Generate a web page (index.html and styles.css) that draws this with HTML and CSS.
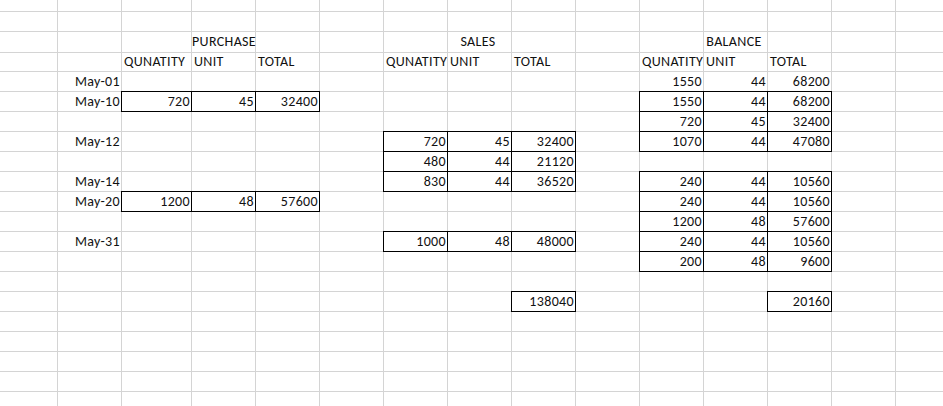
FILE: index.html
```html
<!DOCTYPE html>
<html>
<head>
<meta charset="utf-8">
<title>Sheet</title>
<link rel="stylesheet" href="styles.css">
</head>
<body>
<div class="sheet">
  <div class="row first"><div class="cell"></div><div class="cell"></div><div class="cell"></div><div class="cell"></div><div class="cell"></div><div class="cell"></div><div class="cell"></div><div class="cell"></div><div class="cell"></div><div class="cell"></div><div class="cell"></div><div class="cell"></div><div class="cell"></div><div class="cell"></div><div class="cell"></div></div>
  <div class="row"><div class="cell"></div><div class="cell"></div><div class="cell"></div><div class="cell"></div><div class="cell"></div><div class="cell"></div><div class="cell"></div><div class="cell"></div><div class="cell"></div><div class="cell"></div><div class="cell"></div><div class="cell"></div><div class="cell"></div><div class="cell"></div><div class="cell"></div></div>
  <div class="row"><div class="cell"></div><div class="cell"></div><div class="cell"></div><div class="cell ctr">PURCHASE</div><div class="cell"></div><div class="cell"></div><div class="cell"></div><div class="cell ctr">SALES</div><div class="cell"></div><div class="cell"></div><div class="cell"></div><div class="cell ctr">BALANCE</div><div class="cell"></div><div class="cell"></div><div class="cell"></div></div>
  <div class="row"><div class="cell"></div><div class="cell"></div><div class="cell">QUNATITY</div><div class="cell">UNIT</div><div class="cell">TOTAL</div><div class="cell"></div><div class="cell">QUNATITY</div><div class="cell">UNIT</div><div class="cell">TOTAL</div><div class="cell"></div><div class="cell">QUNATITY</div><div class="cell">UNIT</div><div class="cell">TOTAL</div><div class="cell"></div><div class="cell"></div></div>
  <div class="row"><div class="cell"></div><div class="cell n">May-01</div><div class="cell"></div><div class="cell"></div><div class="cell"></div><div class="cell"></div><div class="cell"></div><div class="cell"></div><div class="cell"></div><div class="cell"></div><div class="cell n">1550</div><div class="cell n">44</div><div class="cell n">68200</div><div class="cell"></div><div class="cell"></div></div>
  <div class="row"><div class="cell"></div><div class="cell n">May-10</div><div class="cell n box">720</div><div class="cell n box">45</div><div class="cell n box">32400</div><div class="cell"></div><div class="cell"></div><div class="cell"></div><div class="cell"></div><div class="cell"></div><div class="cell n box">1550</div><div class="cell n box">44</div><div class="cell n box">68200</div><div class="cell"></div><div class="cell"></div></div>
  <div class="row"><div class="cell"></div><div class="cell"></div><div class="cell"></div><div class="cell"></div><div class="cell"></div><div class="cell"></div><div class="cell"></div><div class="cell"></div><div class="cell"></div><div class="cell"></div><div class="cell n box">720</div><div class="cell n box">45</div><div class="cell n box">32400</div><div class="cell"></div><div class="cell"></div></div>
  <div class="row"><div class="cell"></div><div class="cell n">May-12</div><div class="cell"></div><div class="cell"></div><div class="cell"></div><div class="cell"></div><div class="cell n box">720</div><div class="cell n box">45</div><div class="cell n box">32400</div><div class="cell"></div><div class="cell n box">1070</div><div class="cell n box">44</div><div class="cell n box">47080</div><div class="cell"></div><div class="cell"></div></div>
  <div class="row"><div class="cell"></div><div class="cell"></div><div class="cell"></div><div class="cell"></div><div class="cell"></div><div class="cell"></div><div class="cell n box">480</div><div class="cell n box">44</div><div class="cell n box">21120</div><div class="cell"></div><div class="cell"></div><div class="cell"></div><div class="cell"></div><div class="cell"></div><div class="cell"></div></div>
  <div class="row"><div class="cell"></div><div class="cell n">May-14</div><div class="cell"></div><div class="cell"></div><div class="cell"></div><div class="cell"></div><div class="cell n box">830</div><div class="cell n box">44</div><div class="cell n box">36520</div><div class="cell"></div><div class="cell n box">240</div><div class="cell n box">44</div><div class="cell n box">10560</div><div class="cell"></div><div class="cell"></div></div>
  <div class="row"><div class="cell"></div><div class="cell n">May-20</div><div class="cell n box">1200</div><div class="cell n box">48</div><div class="cell n box">57600</div><div class="cell"></div><div class="cell"></div><div class="cell"></div><div class="cell"></div><div class="cell"></div><div class="cell n box">240</div><div class="cell n box">44</div><div class="cell n box">10560</div><div class="cell"></div><div class="cell"></div></div>
  <div class="row"><div class="cell"></div><div class="cell"></div><div class="cell"></div><div class="cell"></div><div class="cell"></div><div class="cell"></div><div class="cell"></div><div class="cell"></div><div class="cell"></div><div class="cell"></div><div class="cell n box">1200</div><div class="cell n box">48</div><div class="cell n box">57600</div><div class="cell"></div><div class="cell"></div></div>
  <div class="row"><div class="cell"></div><div class="cell n">May-31</div><div class="cell"></div><div class="cell"></div><div class="cell"></div><div class="cell"></div><div class="cell n box">1000</div><div class="cell n box">48</div><div class="cell n box">48000</div><div class="cell"></div><div class="cell n box">240</div><div class="cell n box">44</div><div class="cell n box">10560</div><div class="cell"></div><div class="cell"></div></div>
  <div class="row"><div class="cell"></div><div class="cell"></div><div class="cell"></div><div class="cell"></div><div class="cell"></div><div class="cell"></div><div class="cell"></div><div class="cell"></div><div class="cell"></div><div class="cell"></div><div class="cell n box">200</div><div class="cell n box">48</div><div class="cell n box">9600</div><div class="cell"></div><div class="cell"></div></div>
  <div class="row"><div class="cell"></div><div class="cell"></div><div class="cell"></div><div class="cell"></div><div class="cell"></div><div class="cell"></div><div class="cell"></div><div class="cell"></div><div class="cell"></div><div class="cell"></div><div class="cell"></div><div class="cell"></div><div class="cell"></div><div class="cell"></div><div class="cell"></div></div>
  <div class="row"><div class="cell"></div><div class="cell"></div><div class="cell"></div><div class="cell"></div><div class="cell"></div><div class="cell"></div><div class="cell"></div><div class="cell"></div><div class="cell n box">138040</div><div class="cell"></div><div class="cell"></div><div class="cell"></div><div class="cell n box">20160</div><div class="cell"></div><div class="cell"></div></div>
  <div class="row"><div class="cell"></div><div class="cell"></div><div class="cell"></div><div class="cell"></div><div class="cell"></div><div class="cell"></div><div class="cell"></div><div class="cell"></div><div class="cell"></div><div class="cell"></div><div class="cell"></div><div class="cell"></div><div class="cell"></div><div class="cell"></div><div class="cell"></div></div>
  <div class="row"><div class="cell"></div><div class="cell"></div><div class="cell"></div><div class="cell"></div><div class="cell"></div><div class="cell"></div><div class="cell"></div><div class="cell"></div><div class="cell"></div><div class="cell"></div><div class="cell"></div><div class="cell"></div><div class="cell"></div><div class="cell"></div><div class="cell"></div></div>
  <div class="row"><div class="cell"></div><div class="cell"></div><div class="cell"></div><div class="cell"></div><div class="cell"></div><div class="cell"></div><div class="cell"></div><div class="cell"></div><div class="cell"></div><div class="cell"></div><div class="cell"></div><div class="cell"></div><div class="cell"></div><div class="cell"></div><div class="cell"></div></div>
  <div class="row"><div class="cell"></div><div class="cell"></div><div class="cell"></div><div class="cell"></div><div class="cell"></div><div class="cell"></div><div class="cell"></div><div class="cell"></div><div class="cell"></div><div class="cell"></div><div class="cell"></div><div class="cell"></div><div class="cell"></div><div class="cell"></div><div class="cell"></div></div>
  <div class="row"><div class="cell"></div><div class="cell"></div><div class="cell"></div><div class="cell"></div><div class="cell"></div><div class="cell"></div><div class="cell"></div><div class="cell"></div><div class="cell"></div><div class="cell"></div><div class="cell"></div><div class="cell"></div><div class="cell"></div><div class="cell"></div><div class="cell"></div></div>
</div>
</body>
</html>
```

FILE: styles.css
```css
html, body {
  margin: 0;
  padding: 0;
  background: #ffffff;
  overflow: hidden;
}

.sheet {
  width: 960px;
  font-family: Carlito, Calibri, Lato, "Liberation Sans", sans-serif;
  font-size: 14px;
  letter-spacing: 0.35px;
  color: #111111;
}

.row {
  display: grid;
  grid-template-columns: 58px 64px 70px repeat(12, 64px);
  height: 20px;
}

.row.first {
  height: 12px;
}

.cell {
  box-sizing: border-box;
  border-right: 1px solid #d4d4d4;
  border-bottom: 1px solid #d4d4d4;
  padding: 0 1px 0 2px;
  line-height: 20px;
  white-space: nowrap;
  overflow: hidden;
}

.n {
  text-align: right;
}

.ctr {
  text-align: center;
  overflow: visible;
  padding: 0 3px 0 0;
}

.box {
  border-right-color: #000;
  border-bottom-color: #000;
  box-shadow: -1px 0 0 #000, 0 -1px 0 #000, -1px -1px 0 #000;
}
```
